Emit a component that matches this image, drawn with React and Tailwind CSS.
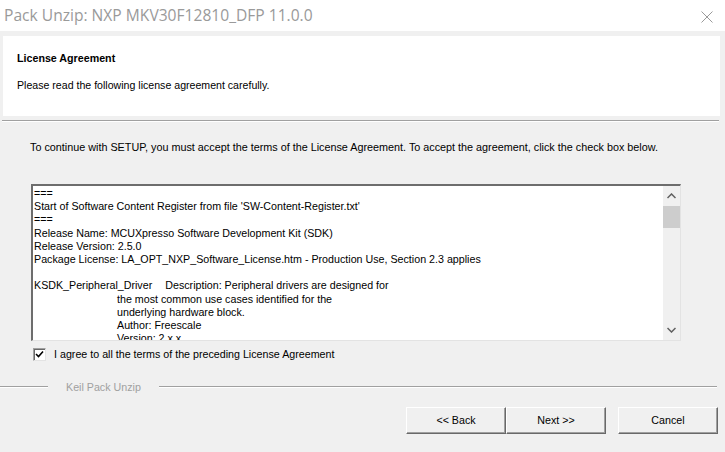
import React, { useState } from "react";

const lines = [
    { t: "===" },
    { t: "Start of Software Content Register from file 'SW-Content-Register.txt'" },
    { t: "===" },
    { t: "Release Name: MCUXpresso Software Development Kit (SDK)" },
    { t: "Release Version: 2.5.0" },
    { t: "Package License: LA_OPT_NXP_Software_License.htm - Production Use, Section 2.3 applies" },
    { t: "\u00a0" },
    { t: "KSDK_Peripheral_Driver", d: "Description: Peripheral drivers are designed for" },
    { t: "the most common use cases identified for the", i: true },
    { t: "underlying hardware block.", i: true },
    { t: "Author: Freescale", i: true },
    { t: "Version: 2.x.x", i: true },
];

const WinButton = ({ children, className = "" }) => (
    <button
        className={`h-[27px] w-[100px] bg-[#f0f0f0] text-[10.7px] text-black border border-t-white border-l-white border-r-[#696969] border-b-[#696969] shadow-[inset_-1px_-1px_0_#a0a0a0] ${className}`}
    >
        {children}
    </button>
);

const App = () => {
    const [agree, setAgree] = useState(true);

    return (
        <div
            className="w-[725px] h-[452px] overflow-hidden bg-[#f0f0f0] text-black"
            style={{ fontFamily: '"Liberation Sans", Arial, sans-serif' }}
        >
            {/* title bar */}
            <div className="h-[31px] bg-white flex items-center justify-between pl-[4px] pr-[12px]">
                <span
                    className="text-[15.6px] text-[#9a9a9a]"
                    style={{ fontFamily: '"Open Sans", "Noto Sans", sans-serif' }}
                >
                    Pack Unzip: NXP MKV30F12810_DFP 11.0.0
                </span>
                <svg width="12" height="12" viewBox="0 0 12 12" className="mt-[2px]">
                    <path d="M0.5 0.5 L11.5 11.5 M11.5 0.5 L0.5 11.5" stroke="#9a9a9a" strokeWidth="1" fill="none" />
                </svg>
            </div>

            {/* header */}
            <div className="pt-[5px] pl-[3px] pr-[5px]">
                <div className="h-[80px] bg-white pl-[14px] pt-[16px]">
                    <div className="text-[10.7px] font-bold leading-[13px]">License Agreement</div>
                    <div className="text-[10.6px] leading-[13px] mt-[14px]">
                        Please read the following license agreement carefully.
                    </div>
                </div>
            </div>
            <div className="mt-[4px] ml-[2px] mr-[6px] h-[2px] border-t border-[#a0a0a0] border-b border-b-white" />

            {/* body */}
            <div className="pl-[30px] pt-[19px] text-[10.8px] leading-[13px]">
                To continue with SETUP, you must accept the terms of the License Agreement. To accept the agreement, click the check box below.
            </div>

            <div className="ml-[31px] mt-[30px] w-[650px] h-[157px] bg-white flex border-t-2 border-l-2 border-t-[#6d6d6d] border-l-[#6d6d6d] border-r border-b border-r-[#e3e3e3] border-b-[#e3e3e3]">
                <div className="flex-1 overflow-hidden pt-[1px] pl-[1px] text-[10.7px] leading-[13.2px] whitespace-nowrap">
                    {lines.map((l, k) => (
                        <div key={k} className={l.i ? "pl-[83px]" : ""}>
                            {l.t}
                            {l.d && <span className="pl-[13px]">{l.d}</span>}
                        </div>
                    ))}
                </div>
                <div className="w-[17px] bg-[#f0f0f0] flex flex-col items-center">
                    <div className="h-[20px] flex items-center justify-center">
                        <svg width="9" height="6" viewBox="0 0 9 6">
                            <path d="M0.5 5 L4.5 1 L8.5 5" stroke="#606060" strokeWidth="1.5" fill="none" />
                        </svg>
                    </div>
                    <div className="w-[17px] h-[22px] bg-[#cdcdcd]" />
                    <div className="flex-1" />
                    <div className="h-[20px] flex items-center justify-center">
                        <svg width="9" height="6" viewBox="0 0 9 6">
                            <path d="M0.5 1 L4.5 5 L8.5 1" stroke="#606060" strokeWidth="1.5" fill="none" />
                        </svg>
                    </div>
                </div>
            </div>

            <label className="flex items-center ml-[33px] mt-[6px] h-[14px] text-[10.7px]">
                <span
                    onClick={() => setAgree(!agree)}
                    className="w-[13px] h-[13px] bg-white border border-t-[#a0a0a0] border-l-[#a0a0a0] border-r-[#e3e3e3] border-b-[#e3e3e3] shadow-[inset_1px_1px_0_#696969] flex items-center justify-center"
                >
                    {agree && (
                        <svg width="9" height="9" viewBox="0 0 9 9">
                            <path d="M1 4 L3.5 6.5 L8 1.5" stroke="#000" strokeWidth="1.6" fill="none" />
                        </svg>
                    )}
                </span>
                <span className="ml-[8px]">I agree to all the terms of the preceding License Agreement</span>
            </label>

            {/* group line */}
            <div className="mt-[20px] flex items-center h-[12px]">
                <div className="w-[48px] h-[2px] border-t border-[#a0a0a0] border-b border-b-white" />
                <span className="px-[18px] text-[10.7px] text-[#a0a0a0]">Keil Pack Unzip</span>
                <div className="w-[558px] h-[2px] border-t border-[#a0a0a0] border-b border-b-white" />
            </div>

            {/* buttons */}
            <div className="mt-[14px] flex pl-[406px]">
                <WinButton>&lt;&lt; Back</WinButton>
                <WinButton>Next &gt;&gt;</WinButton>
                <WinButton className="ml-[12px]">Cancel</WinButton>
            </div>
        </div>
    );
};

export default App;
